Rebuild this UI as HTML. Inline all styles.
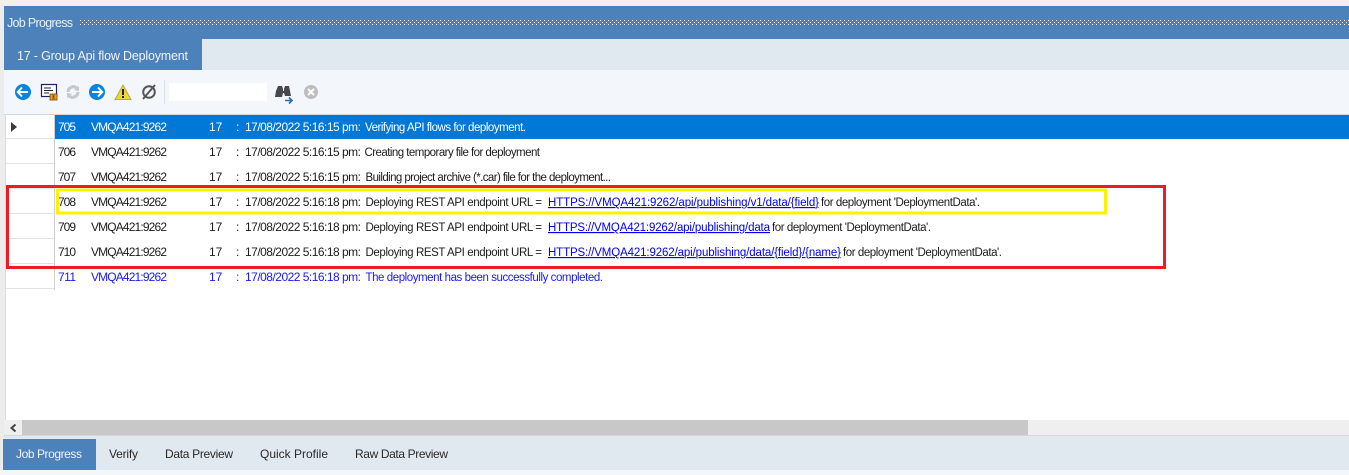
<!DOCTYPE html>
<html><head><meta charset="utf-8"><style>
html,body{margin:0;padding:0;width:1349px;height:475px;overflow:hidden;background:#fff}
svg{display:block;font-family:"Liberation Sans",sans-serif;font-size:12px}
.m{font-size:11.5px}
</style></head><body>
<svg width="1349" height="475" viewBox="0 0 1349 475" xmlns="http://www.w3.org/2000/svg">
<defs><pattern id="g" width="4" height="4" patternUnits="userSpaceOnUse" x="80" y="20"><rect x="0" y="0" width="1" height="1" fill="#fff"/><rect x="2" y="2" width="1" height="1" fill="#fff"/></pattern></defs>
<rect width="1349" height="475" fill="#fff"/>
<rect width="1349" height="6" fill="#f1f0ef"/>
<rect y="5" width="5" height="470" fill="#ececec"/>
<rect x="4" y="6" width="1345" height="33" fill="#4d81b9"/>
<rect x="80" y="20" width="1269" height="5" fill="url(#g)"/>
<text x="7" y="27" fill="#e8eff7" font-size="12.500" textLength="66">Job Progress</text>
<rect x="4" y="39" width="1345" height="32" fill="#e0e8f0"/>
<rect x="4" y="39" width="198" height="31" fill="#4d81b9"/>
<text x="17" y="60" fill="#edf3f9" font-size="12.500" textLength="171">17 - Group Api flow Deployment</text>
<rect x="4" y="70" width="1345" height="44" fill="#f3f6fa"/>
<rect x="4" y="114" width="1345" height="1" fill="#d8d8d8"/>

<!-- toolbar -->
<circle cx="23" cy="92" r="8" fill="#0a84dc"/><path d="M28 92H18M22 87.500L17.800 92L22 96.500" fill="none" stroke="#fff" stroke-width="2"/>
<rect x="41.500" y="84.500" width="15" height="12" fill="#fff" stroke="#20206a" stroke-width="1.200"/><path d="M44 88h7M44 90.500h9M44 93h5" stroke="#222" stroke-width="1"/><rect x="50" y="94" width="3" height="6" fill="#f0a020" stroke="#7a4a00" stroke-width=".8"/><rect x="54" y="94" width="3" height="6" fill="#f0a020" stroke="#7a4a00" stroke-width=".8"/>
<path d="M68 92a5.500 5.500 0 0 1 9-4M78 92a5.500 5.500 0 0 1-9 4" fill="none" stroke="#c4c8cc" stroke-width="3"/><path d="M74 90l5-4v5zM72 94l-5 4v-5z" fill="#c4c8cc"/>
<circle cx="97" cy="92" r="8" fill="#0a84dc"/><path d="M92 92h10M98 87.500L102.200 92L98 96.500" fill="none" stroke="#fff" stroke-width="2"/>
<path d="M123 85l8 14.500h-16z" fill="#ecd63c" stroke="#b8a850"/><rect x="122" y="89" width="2" height="6" fill="#222"/><rect x="122" y="96" width="2" height="2" fill="#222"/>
<circle cx="149" cy="92" r="5.800" fill="none" stroke="#555" stroke-width="2"/><path d="M143 99L155 85" stroke="#555" stroke-width="2"/>
<rect x="164" y="80" width="1" height="24" fill="#dde1e6"/>
<rect x="169" y="83" width="98" height="18" rx="1" fill="#fff"/>
<path d="M278 86h4l1 3v2h1v-2l1-3h4l1 5 1 5h-6l-1-3h-1l-1 4h-7l1-6z" fill="#47474d"/>
<path d="M285 100.500h7M289 97.500l3 3-3 3" fill="none" stroke="#2a6cc0" stroke-width="1.600"/>
<circle cx="311" cy="92" r="7" fill="#bdbdbd"/><path d="M308 89l6 6M314 89l-6 6" stroke="#fff" stroke-width="2"/>

<!-- row header -->
<rect x="5" y="115" width="1" height="305" fill="#dcdcdc"/>
<rect x="54" y="115" width="1" height="175" fill="#d0d0d0"/>
<g fill="#e2e2e2"><rect x="6" y="138" width="48" height="1"/><rect x="6" y="163" width="48" height="1"/><rect x="6" y="188" width="48" height="1"/><rect x="6" y="213" width="48" height="1"/><rect x="6" y="238" width="48" height="1"/><rect x="6" y="263" width="48" height="1"/><rect x="6" y="288" width="48" height="1"/></g>
<path d="M11 122l6 5-6 5z" fill="#3c3c3c"/>
<rect x="55" y="115" width="1294" height="24" fill="#0078d7"/>

<g fill="#fff"><text x="58" y="131" textLength="18">705</text><text x="91" y="131" textLength="76">VMQA421:9262</text><text x="209" y="131">17</text><text x="236" y="131">:</text><text x="245" y="131" textLength="116">17/08/2022 5:16:15 pm:</text><text class="m" x="365" y="131" textLength="161">Verifying API flows for deployment.</text></g>
<g fill="#1c1c1c"><text x="58" y="156" textLength="18">706</text><text x="91" y="156" textLength="76">VMQA421:9262</text><text x="209" y="156">17</text><text x="236" y="156">:</text><text x="245" y="156" textLength="116">17/08/2022 5:16:15 pm:</text><text class="m" x="364.500" y="156" textLength="175.500">Creating temporary file for deployment</text>
<text x="58" y="181" textLength="18">707</text><text x="91" y="181" textLength="76">VMQA421:9262</text><text x="209" y="181">17</text><text x="236" y="181">:</text><text x="245" y="181" textLength="116">17/08/2022 5:16:15 pm:</text><text class="m" x="365.500" y="181" textLength="245.500">Building project archive (*.car) file for the deployment...</text>
<text x="58" y="206" textLength="18">708</text><text x="91" y="206" textLength="76">VMQA421:9262</text><text x="209" y="206">17</text><text x="236" y="206">:</text><text x="245" y="206" textLength="116">17/08/2022 5:16:18 pm:</text><text class="m" x="365.500" y="206" textLength="176.500">Deploying REST API endpoint URL =</text><text class="m" x="821" y="206" textLength="159">for deployment 'DeploymentData'.</text>
<text x="58" y="231" textLength="18">709</text><text x="91" y="231" textLength="76">VMQA421:9262</text><text x="209" y="231">17</text><text x="236" y="231">:</text><text x="245" y="231" textLength="116">17/08/2022 5:16:18 pm:</text><text class="m" x="365.500" y="231" textLength="176.500">Deploying REST API endpoint URL =</text><text class="m" x="772" y="231" textLength="159">for deployment 'DeploymentData'.</text>
<text x="58" y="256" textLength="18">710</text><text x="91" y="256" textLength="76">VMQA421:9262</text><text x="209" y="256">17</text><text x="236" y="256">:</text><text x="245" y="256" textLength="116">17/08/2022 5:16:18 pm:</text><text class="m" x="365.500" y="256" textLength="176.500">Deploying REST API endpoint URL =</text><text class="m" x="843" y="256" textLength="159">for deployment 'DeploymentData'.</text></g>
<g fill="#0000ee" text-decoration="underline"><text class="m" x="548" y="206" textLength="271">HTTPS://VMQA421:9262/api/publishing/v1/data/{field}</text><text class="m" x="548" y="231" textLength="222">HTTPS://VMQA421:9262/api/publishing/data</text><text class="m" x="548" y="256" textLength="293">HTTPS://VMQA421:9262/api/publishing/data/{field}/{name}</text></g>
<g fill="#1a1ae6"><text x="58" y="281" textLength="18">711</text><text x="91" y="281" textLength="76">VMQA421:9262</text><text x="209" y="281">17</text><text x="236" y="281">:</text><text x="245" y="281" textLength="116">17/08/2022 5:16:18 pm:</text><text class="m" x="365.500" y="281" textLength="237.500">The deployment has been successfully completed.</text></g>

<rect x="7.500" y="186.500" width="1157" height="81" fill="none" stroke="#ed1c24" stroke-width="3"/>
<rect x="57.500" y="190" width="1048" height="23" fill="none" stroke="#fff200" stroke-width="3"/>

<!-- scrollbar -->
<rect x="4" y="420" width="1345" height="16" fill="#efefef"/>
<rect x="22" y="420" width="1006" height="15" fill="#c8c8c8"/>
<path d="M15.500 424.500L11.500 428L15.500 431.500" fill="none" stroke="#444" stroke-width="2"/>
<rect x="4" y="435" width="1345" height="1" fill="#d4d8dc"/>

<!-- bottom tabs -->
<rect x="4" y="436" width="1345" height="34" fill="#e0e8f0"/>
<rect y="470" width="1349" height="5" fill="#f3f6fa"/>
<rect x="3" y="439" width="93" height="31" fill="#4d81b9"/>
<text x="16" y="458" fill="#edf3f9" textLength="66">Job Progress</text>
<g fill="#2a2a2a"><text x="109" y="458" textLength="29">Verify</text><text x="165" y="458" textLength="68">Data Preview</text><text x="260" y="458" textLength="68">Quick Profile</text><text x="355" y="458" textLength="93">Raw Data Preview</text></g>
</svg>
</body></html>
